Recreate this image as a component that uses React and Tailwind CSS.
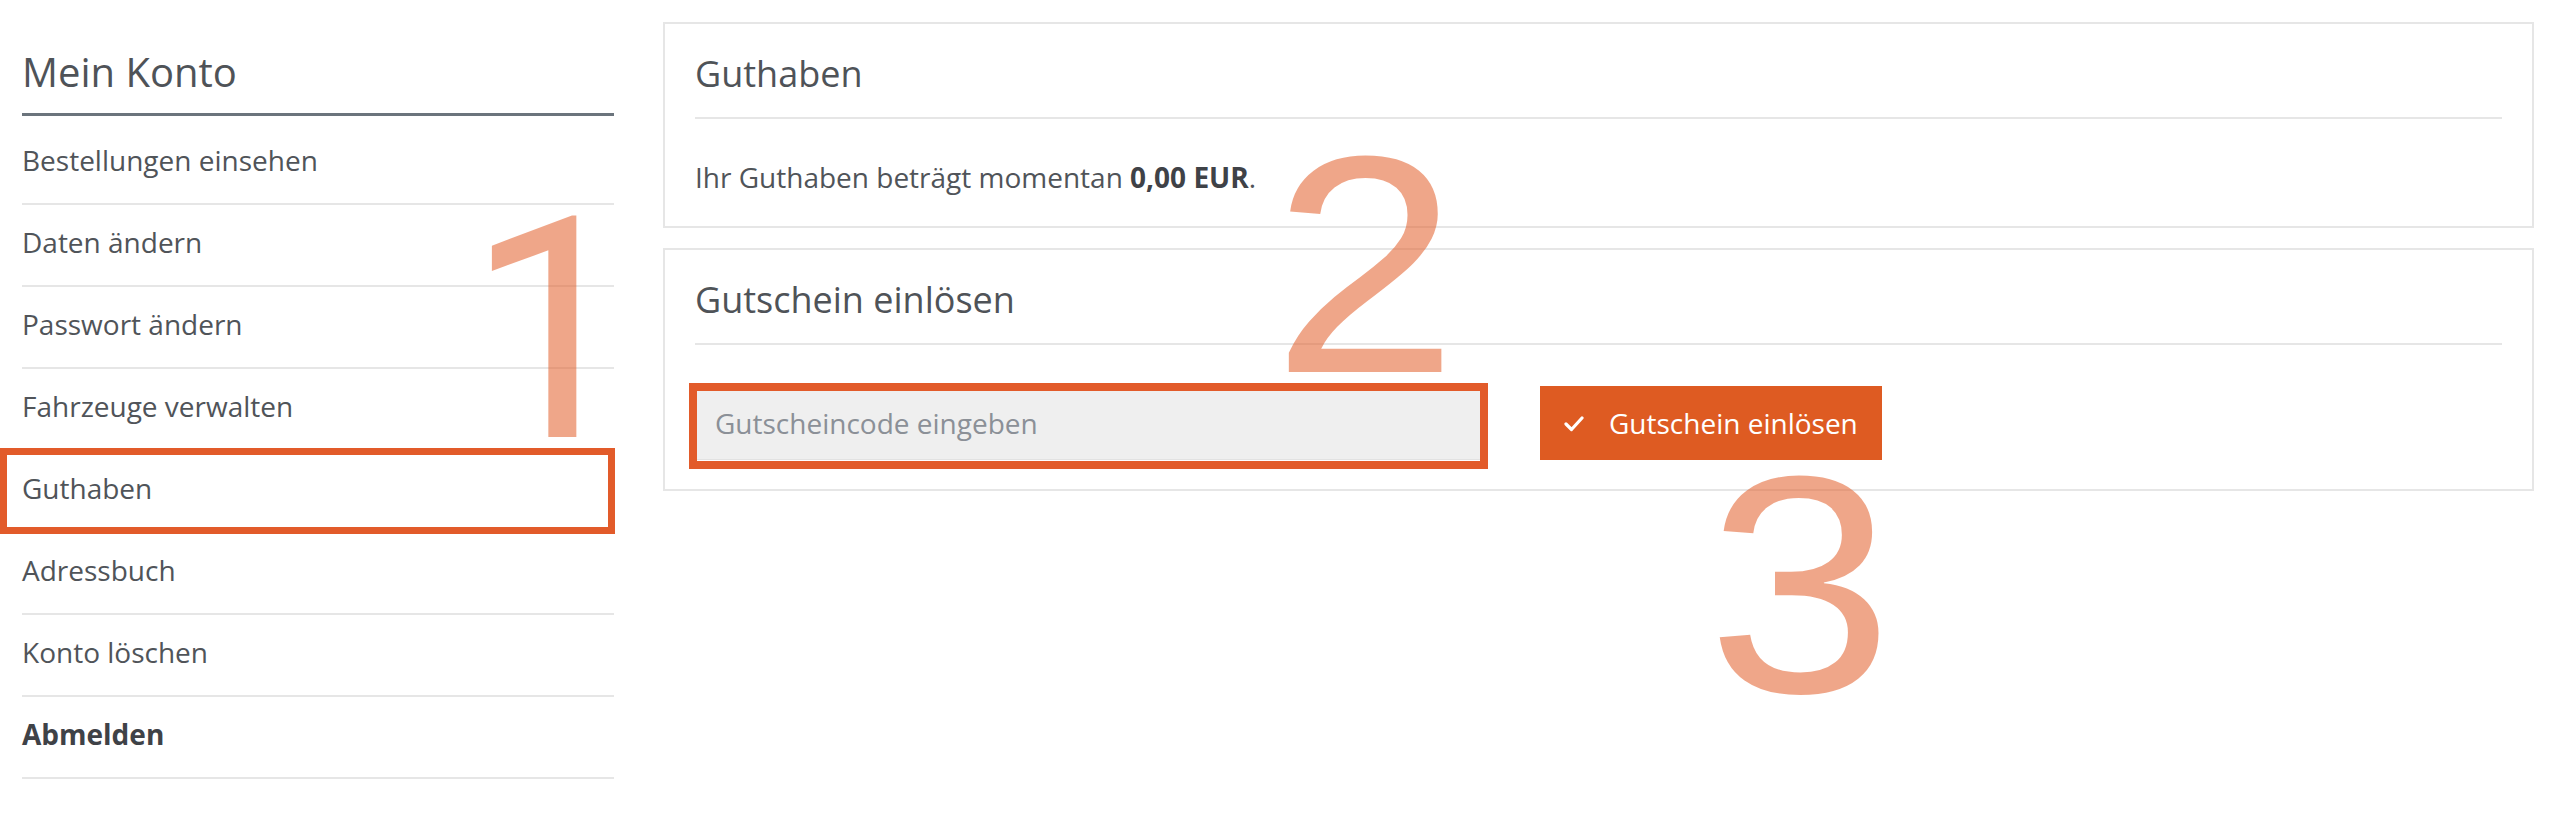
import React from "react";

const items = [
  "Bestellungen einsehen",
  "Daten ändern",
  "Passwort ändern",
  "Fahrzeuge verwalten",
  "Guthaben",
  "Adressbuch",
  "Konto löschen",
  "Abmelden",
];

function CheckIcon() {
  return (
    <svg width="20" height="17" viewBox="0 0 20 17" fill="none" className="shrink-0">
      <polyline points="2,9 7.5,14.5 18,3" stroke="white" strokeWidth="3.2" strokeLinecap="round" strokeLinejoin="round" />
    </svg>
  );
}

export default function App() {
  return (
    <div className="relative flex w-full h-[814px] bg-white font-['Open_Sans',sans-serif] text-[#505459] overflow-hidden">
      {/* Sidebar */}
      <aside className="w-[614px] shrink-0 pl-[22px]">
        <h2 className="text-[40px] leading-[48px] pt-[48px] pb-[17px] border-b-[3px] border-[#6b747c] text-[#4f5358] font-normal">
          Mein Konto
        </h2>
        <ul className="mt-[7px]">
          {items.map((it) => (
            <li
              key={it}
              className={
                "relative border-b-2 border-[#e6e6e6] pt-[16px] pb-[22px] text-[28px] leading-[42px] " +
                (it === "Abmelden" ? "font-bold text-[#3f4247]" : "")
              }
            >
              {it}
              {it === "Guthaben" && (
                <div className="absolute -left-[22px] -right-[1px] -top-[3px] -bottom-[3px] border-[7px] border-[#e25b2a]" />
              )}
            </li>
          ))}
        </ul>
      </aside>

      {/* Main */}
      <main className="flex-1 ml-[49px] mr-[38px] pt-[22px] flex flex-col gap-[20px]">
        <section className="border-2 border-[#e6e6e6] px-[30px] pt-[28px] pb-[28px]">
          <h3 className="text-[36px] leading-[44px] font-normal text-[#4f5358]">Guthaben</h3>
          <div className="mt-[21px] h-[2px] bg-[#e6e6e6]" />
          <p className="pt-[37px] text-[28px] leading-[42px]">
            Ihr Guthaben beträgt momentan <span className="font-bold text-[#3f4247]">0,00 EUR</span>.
          </p>
        </section>

        <section className="border-2 border-[#e6e6e6] px-[30px] pt-[28px] pb-[29px]">
          <h3 className="text-[36px] leading-[44px] font-normal text-[#4f5358]">Gutschein einlösen</h3>
          <div className="mt-[21px] h-[2px] bg-[#e6e6e6]" />
          <div className="pt-[41px] flex items-center">
            <div className="relative w-[789px] h-[74px] shrink-0">
              <input
                type="text"
                placeholder="Gutscheincode eingeben"
                className="w-full h-full bg-[#efefef] border border-[#e2e2e2] pl-[19px] text-[28px] leading-[42px] text-[#505459] placeholder:text-[#8b9097] outline-none"
              />
              <div className="absolute -left-[6px] -right-[4px] -top-[3px] -bottom-[9px] border-[8px] border-[#e25b2a] pointer-events-none" />
            </div>
            <button className="ml-[56px] w-[342px] h-[74px] bg-[#de5b22] text-white flex items-center pl-[24px] gap-[25px] text-[28px] leading-[42px]">
              <CheckIcon />
              <span>Gutschein einlösen</span>
            </button>
          </div>
        </section>
      </main>

      {/* Annotation digits */}
      <span className="absolute left-[466px] top-[176px] text-[310px] leading-none font-['Roboto',sans-serif] text-[rgba(226,92,40,0.55)] pointer-events-none">
        1
      </span>
      <span className="absolute left-[1272px] top-[110px] origin-left scale-x-[1.08] text-[310px] leading-none font-['Liberation_Sans'] text-[rgba(226,92,40,0.55)] pointer-events-none">
        2
      </span>
      <span className="absolute left-[1707px] top-[430px] origin-left scale-x-[1.08] text-[310px] leading-none font-['Liberation_Sans'] text-[rgba(226,92,40,0.55)] pointer-events-none">
        3
      </span>
    </div>
  );
}
